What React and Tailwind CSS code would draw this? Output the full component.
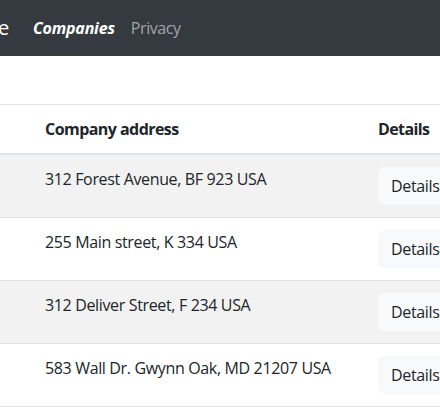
import React from "react";

const rows = [
  "312 Forest Avenue, BF 923 USA",
  "255 Main street, K 334 USA",
  "312 Deliver Street, F 234 USA",
  "583 Wall Dr. Gwynn Oak, MD 21207 USA",
];

export default function App() {
  return (
    <div
      className="w-[440px] h-[407px] overflow-hidden bg-white text-[#212529] text-base leading-6 tracking-[-0.35px]"
      style={{ fontFamily: '"Open Sans", "Noto Sans", Arial, sans-serif' }}
    >
      <nav className="h-[56px] bg-[#343a40] flex items-center">
        <div className="w-[9px] overflow-hidden flex justify-end shrink-0">
          <span className="shrink-0 text-[20px] leading-[30px] text-white whitespace-nowrap">
            Employee
          </span>
        </div>
        <div className="ml-[16px] flex items-center">
          <a className="px-2 py-2 text-white font-bold italic whitespace-nowrap tracking-[-0.2px]">Companies</a>
          <a className="px-2 py-2 text-[#ffffff8c] whitespace-nowrap tracking-[-0.4px]">Privacy</a>
        </div>
      </nav>

      <div className="mt-[48px] w-[540px] border-t border-[#dee2e6]">
        <div className="grid grid-cols-[33px_333px_1fr] border-b-2 border-[#dee2e6]">
          <div className="p-3"></div>
          <div className="p-3 font-bold whitespace-nowrap tracking-[-0.55px]">Company address</div>
          <div className="p-3 font-bold whitespace-nowrap tracking-[-0.6px]">Details</div>
        </div>
        {rows.map((r, i) => (
          <div
            key={i}
            className={
              "grid grid-cols-[33px_333px_1fr] border-b border-[#dee2e6] " +
              (i % 2 === 0 ? "bg-[#f2f2f2]" : "bg-white")
            }
          >
            <div className="p-3"></div>
            <div className="p-3 whitespace-nowrap">{r}</div>
            <div className="p-3">
              <button className="px-3 py-1.5 bg-[#f8f9fa] border border-[#f8f9fa] rounded-md leading-6 text-[#212529]">
                Details
              </button>
            </div>
          </div>
        ))}
      </div>
    </div>
  );
}
